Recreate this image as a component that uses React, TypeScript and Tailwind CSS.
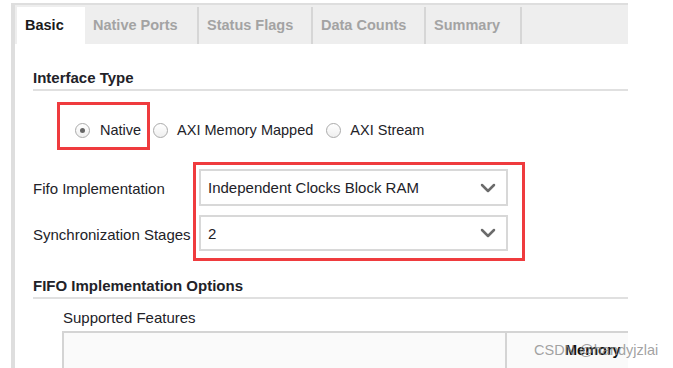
import React from 'react';

const tabs = [
  { label: 'Basic', w: 'w-[68px]', active: true },
  { label: 'Native Ports', w: 'w-[114px]' },
  { label: 'Status Flags', w: 'w-[114px]' },
  { label: 'Data Counts', w: 'w-[113px]' },
  { label: 'Summary', w: 'w-[96px]' },
];

const Radio = ({ checked }: { checked?: boolean }) => (
  <span className="w-[15px] h-[15px] rounded-full border border-[#aaaaaa] bg-gradient-to-b from-white to-[#efefef] flex items-center justify-center shrink-0">
    {checked && <span className="w-[5px] h-[5px] rounded-full bg-[#666666]" />}
  </span>
);

const Chevron = () => (
  <svg width="24" height="24" viewBox="0 0 24 24" fill="none" stroke="#6b6b6b" strokeWidth="2.5" strokeLinecap="round" strokeLinejoin="round">
    <path d="m6 9 6 6 6-6" />
  </svg>
);

const Select = ({ value, h }: { value: string; h: string }) => (
  <div className={`${h} w-[309px] border-2 border-[#d8d8d8] bg-white flex items-center justify-between pl-[7px] pr-[6px]`}>
    <span className="pt-[1px]">{value}</span>
    <Chevron />
  </div>
);

export default function App() {
  return (
    <div className="relative w-[673px] h-[368px] overflow-hidden bg-white text-[#222228] font-['Liberation_Sans',Arial,sans-serif] text-[15px] leading-[18px]">
      <div className="ml-[11px] mt-[3px] w-[617px] h-[365px] border-l-4 border-t-2 border-[#dedede]">
        {/* Tabs */}
        <div className="h-[39px] bg-[#eeeeee] pl-[2px] pt-[2px] flex">
          {tabs.map(t => (
            <div
              key={t.label}
              className={`${t.w} h-[37px] pl-2 pb-[2px] flex items-center font-bold text-[14.5px] ${
                t.active ? 'bg-white text-[#1a1a1a]' : 'text-[#a3a3a3] border-r-2 border-[#d6d6d6]'
              }`}
            >
              {t.label}
            </div>
          ))}
        </div>

        {/* Interface Type */}
        <div className="mt-[25px] ml-[18px] pb-[2px] border-b-2 border-[#e0e0e0] font-bold">Interface Type</div>

        <div className="mt-[11px] ml-[42px] flex items-start text-[14.5px] leading-[15px]">
          <div className="border-[3px] border-[#ef3b3e] pl-[15px] pr-[6px] pt-[18px] pb-[9px] flex items-center h-[48px]">
            <Radio checked />
            <span className="ml-[10px]">Native</span>
          </div>
          <div className="mt-[21px] ml-[3px] flex items-center h-[15px]">
            <Radio />
            <span className="ml-[9px]">AXI Memory Mapped</span>
            <span className="ml-[13px]"><Radio /></span>
            <span className="ml-[9px]">AXI Stream</span>
          </div>
        </div>

        {/* Implementation selects */}
        <div className="mt-[12px] ml-[18px] flex">
          <div className="w-[160px] pt-[8px] flex flex-col gap-[9px]">
            <div className="h-[37px] flex items-center">Fifo Implementation</div>
            <div className="h-[37px] flex items-center">Synchronization Stages</div>
          </div>
          <div className="border-[3px] border-[#ef3b3e] pl-[3px] pr-[14px] pt-[4px] pb-[7px] flex flex-col gap-[9px]">
            <Select value="Independent Clocks Block RAM" h="h-[37px]" />
            <Select value="2" h="h-[36px]" />
          </div>
        </div>

        {/* FIFO Implementation Options */}
        <div className="mt-[16px] ml-[18px] pb-[2px] border-b-2 border-[#e0e0e0] font-bold">FIFO Implementation Options</div>

        <div className="mt-[10px] ml-[48px]">Supported Features</div>

        <div className="mt-[4px] ml-[47px] h-[60px] border-t-2 border-l-2 border-[#d4d4d4] bg-[#fafafa] flex">
          <div className="w-[443px] border-r-2 border-[#d4d4d4]" />
          <div className="h-[34px] pl-[58px] flex items-center font-bold text-[14.5px] text-[#111]">Memory</div>
        </div>
      </div>

      <div className="absolute left-[534px] top-[341px] text-[14.5px] text-[#8a8a8a]/80">CSDN @handyjzlai</div>
    </div>
  );
}
